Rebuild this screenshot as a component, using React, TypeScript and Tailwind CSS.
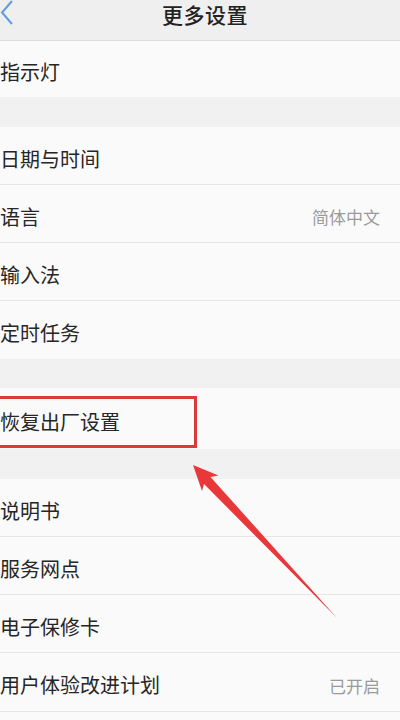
const font = { fontFamily: '"Noto Sans CJK SC", "Noto Sans", sans-serif' };

type Item = { label: string; value?: string; h?: string };

function Row({ label, value, last, h = "h-[58px]" }: Item & { last?: boolean }) {
  return (
    <div
      className={`${h} flex items-center justify-between bg-[#fafafa] pt-[6px] pr-[20px] ${
        last ? "" : "border-b border-[#e6e6e6]"
      }`}
    >
      <span className="text-[20px] text-[#262626] leading-none">{label}</span>
      {value && <span className="text-[17px] text-[#9a9a9a] leading-none">{value}</span>}
    </div>
  );
}

function Group({ items }: { items: Item[] }) {
  return (
    <div>
      {items.map((it, i) => (
        <Row key={it.label} {...it} last={i === items.length - 1} />
      ))}
    </div>
  );
}

export default function App() {
  return (
    <div className="relative flex flex-col w-[400px] h-[720px] overflow-hidden bg-[#f1f1f1]" style={font}>
      {/* header */}
      <div className="relative h-[41px] shrink-0 bg-[#efefef] border-b border-[#dcdcdc]">
        <svg className="absolute left-0 top-0" width="16" height="26" viewBox="0 0 16 26">
          <path d="M12 1 L2 12.5 L12 24" fill="none" stroke="#5d9ee0" strokeWidth="2" />
        </svg>
        <div className="absolute left-[162px] top-[2px] text-[21px] font-medium text-[#222] tracking-[0.5px] leading-[24px]">
          更多设置
        </div>
      </div>

      <Group items={[{ label: "指示灯", h: "h-[56px]" }]} />
      <div className="h-[30px] shrink-0" />
      <Group
        items={[
          { label: "日期与时间" },
          { label: "语言", value: "简体中文" },
          { label: "输入法" },
          { label: "定时任务" },
        ]}
      />
      <div className="h-[29px] shrink-0" />
      <div className="relative">
        <Group items={[{ label: "恢复出厂设置", h: "h-[61px]" }]} />
        <div className="absolute left-[-4px] top-[8px] w-[201px] h-[52px] border-[3px] border-[#d93b3b]" />
      </div>
      <div className="h-[30px] shrink-0" />
      <div className="border-b border-[#e6e6e6]">
        <Group
          items={[
            { label: "说明书" },
            { label: "服务网点" },
            { label: "电子保修卡" },
            { label: "用户体验改进计划", value: "已开启" },
          ]}
        />
      </div>
      <div className="flex-1 bg-[#fafafa]" />

      {/* annotation arrow */}
      <svg className="absolute inset-0 pointer-events-none" width="400" height="720" viewBox="0 0 400 720">
        <polygon
          points="193,465 218.5,475.5 210.5,477 337,618 204,484 202,491"
          fill="#e8383a"
        />
      </svg>
    </div>
  );
}
